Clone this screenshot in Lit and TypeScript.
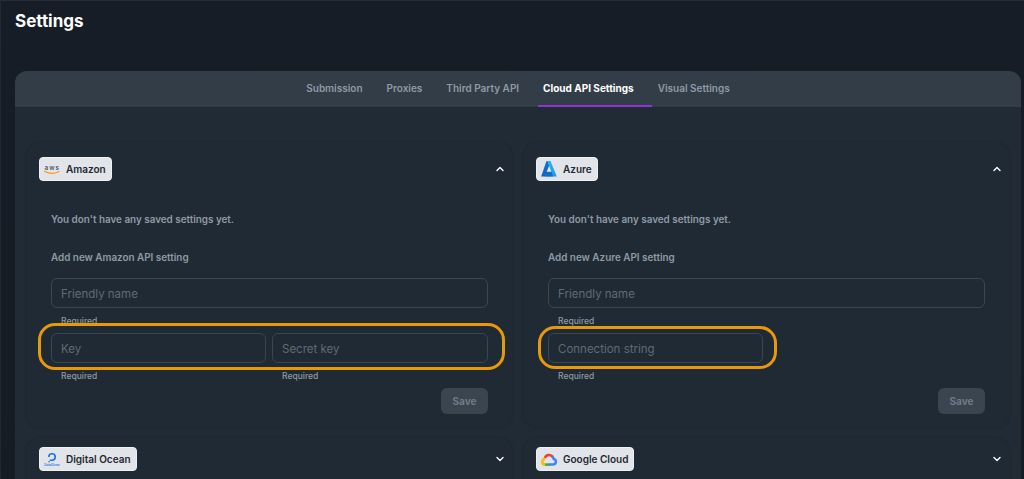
import { LitElement, html, css, svg } from "lit";
import { customElement, property } from "lit/decorators.js";

const chevron = (up: boolean) => html`<svg class="chev" width="8" height="8" viewBox="0 0 8 8" fill="none">
  <path d=${up ? "M1 5.4 4 2.6l3 2.8" : "M1 2.6 4 5.4l3-2.8"} stroke="#fff" stroke-width="1.4" stroke-linecap="round" stroke-linejoin="round" />
</svg>`;

const logos: Record<string, unknown> = {
  Amazon: svg`<svg width="16" height="11" viewBox="0 0 16 11">
    <text x="0.5" y="5.8" font-family="Inter, sans-serif" font-size="6.4" font-weight="500" fill="#3a4350" textLength="14.5">aws</text>
    <path d="M.6 7.2c4.4 2.6 10 2.6 14.4.2" fill="none" stroke="#f39c25" stroke-width="1.1" stroke-linecap="round" />
  </svg>`,
  Azure: svg`<svg width="16" height="16" viewBox="0 0 15 15">
    <defs>
      <linearGradient id="az1" x1="0" y1="0" x2="0.3" y2="1"><stop offset="0" stop-color="#1278cf"/><stop offset="1" stop-color="#0b62bd"/></linearGradient>
      <linearGradient id="az2" x1="0.2" y1="0" x2="0.7" y2="1"><stop offset="0" stop-color="#2fb6ee"/><stop offset="1" stop-color="#1d9be6"/></linearGradient>
    </defs>
    <path d="M5 .3h4.2L3.6 14.6H.2Z" fill="url(#az1)"/>
    <path d="M9 .3H6l3.7 10-5 2.2-1 2.1h11.1Z" fill="url(#az2)"/>
    <path d="M4.8 10h5l1.5 4.6H3.4Z" fill="#0c6ec9"/>
  </svg>`,
  "Digital Ocean": svg`<svg width="16" height="14" viewBox="0 0 16 14">
    <path d="M8 9V7.4a2.4 2.4 0 1 0-2.4-2.4H4a4 4 0 1 1 4 4Z" fill="#1a73e8"/>
    <path d="M5.8 9H8V7.4H5.8ZM4.4 10.2h1.4V9H4.4Z" fill="#1a73e8"/>
    <text x="0" y="13.6" font-family="Inter, sans-serif" font-size="2.8" font-weight="600" fill="#2f7fe6" textLength="16">DigitalOcean</text>
  </svg>`,
  "Google Cloud": svg`<svg width="16" height="13" viewBox="0 0 16 13" fill="none" stroke-width="2.5">
    <path d="M12 4.2A4.6 4.6 0 0 0 3.8 5" stroke="#ea4335"/>
    <path d="M11.2 3.4A4.4 4.4 0 0 1 12.6 6.6" stroke="#4285f4"/>
    <path d="M12 6a2.8 2.8 0 0 1 .2 5.6H8" stroke="#4285f4"/>
    <path d="M8.6 11.6H3.6" stroke="#34a853"/>
    <path d="M4.2 11.6A2.8 2.8 0 0 1 4 6" stroke="#fbbc05"/>
  </svg>`,
};

@customElement("text-field")
class TextField extends LitElement {
  static styles = css`
    :host {
      display: block;
      min-width: 0;
    }
    input {
      display: block;
      box-sizing: border-box;
      width: 100%;
      height: 30px;
      padding: 1px 9px 0;
      background: transparent;
      border: 1px solid #3b4650;
      border-radius: 6px;
      color: #fff;
      font: 400 11.5px Inter, sans-serif;
      outline: none;
    }
    input::placeholder {
      color: #5f6a75;
      opacity: 1;
    }
    .hint {
      height: 25px;
      padding: 7px 0 0 10px;
      box-sizing: border-box;
      color: #8f9aa5;
      font: 500 8.5px/12px Inter, sans-serif;
    }
  `;

  @property() placeholder = "";

  render() {
    return html`
      <input type="text" placeholder=${this.placeholder} />
      <div class="hint">Required</div>
    `;
  }
}

@customElement("app-root")
export class AppRoot extends LitElement {
  static styles = css`
    :host {
      display: block;
      box-sizing: border-box;
      height: 479px;
      overflow: hidden;
      padding: 0 3px 0 14px;
      border-top: 1px solid #272d36;
      border-left: 1px solid #232933;
      background: linear-gradient(#171d26, #161c24);
      font-family: Inter, sans-serif;
    }
    h1 {
      margin: 0;
      height: 70px;
      padding-top: 10px;
      box-sizing: border-box;
      color: #fff;
      font-size: 17px;
      line-height: 20px;
      font-weight: 700;
    }
    .panel {
      background: #212b35;
      border-radius: 12px 12px 0 0;
      padding-bottom: 12px;
    }
    .tabs {
      display: flex;
      justify-content: center;
      gap: 24px;
      height: 36px;
      background: #333d47;
      border-radius: 12px 12px 0 0;
    }
    .tab {
      display: flex;
      align-items: center;
      box-sizing: border-box;
      height: 36px;
      padding-bottom: 2px;
      color: #8f9aa5;
      font-size: 10px;
      font-weight: 600;
      white-space: nowrap;
    }
    .tab.active {
      color: #fff;
      font-weight: 700;
      border-bottom: 2px solid #8e33d6;
      margin: 0 -18px 0 -5px;
      padding: 0 18px 0 5px;
    }
    .grid {
      display: grid;
      grid-template-columns: 485px 485px;
      gap: 11px 12px;
      padding: 36px 12px 0;
    }
    .card {
      background: #202a34;
      border-radius: 12px;
      box-shadow: 0 0 3px rgba(0, 0, 0, 0.18);
    }
    .head {
      display: flex;
      align-items: center;
      justify-content: space-between;
      padding: 14px 8px 0 12px;
      height: 24px;
    }
    .head.closed {
      padding-top: 9px;
    }
    .chev {
      display: block;
    }
    .chip {
      display: flex;
      align-items: center;
      gap: 6px;
      box-sizing: border-box;
      height: 24px;
      padding: 0 5px 0 4px;
      background: #e1e4e8;
      border: 1px solid #eef0f2;
      border-radius: 4px;
      color: #1f2732;
      font-size: 10px;
      font-weight: 600;
      white-space: nowrap;
    }
    .logo {
      display: flex;
      align-items: center;
      justify-content: center;
      width: 16px;
      height: 16px;
    }
    .body {
      padding: 30px 24px 13px;
    }
    .msg {
      margin: 0;
      color: #8f9aa5;
      font-size: 9.9px;
      line-height: 16px;
      font-weight: 600;
    }
    .add {
      margin: 22px 0 13px;
    }
    .row {
      position: relative;
      display: grid;
      grid-template-columns: 215px 1fr;
      gap: 6px;
    }
    .ring {
      position: absolute;
      box-sizing: border-box;
      top: -10px;
      left: -13px;
      right: -17px;
      height: 47px;
      border: 3px solid #e8990a;
      border-radius: 17px;
      pointer-events: none;
    }
    .ring.half {
      right: auto;
      left: -10px;
      width: 239px;
      top: -7px;
      height: 43px;
    }
    .actions {
      display: flex;
      justify-content: flex-end;
    }
    button {
      width: 47px;
      height: 26px;
      padding: 0;
      border: none;
      border-radius: 6px;
      background: #3a4550;
      color: #6f7b88;
      font: 700 10px Inter, sans-serif;
    }
  `;

  private renderChip(name: string) {
    return html`<div class="chip">
      <span class="logo">${logos[name]}</span>${name}
    </div>`;
  }

  private renderCard(name: string, fields: string[]) {
    return html`
      <section class="card">
        <div class="head">${this.renderChip(name)} ${chevron(true)}</div>
        <div class="body">
          <p class="msg">You don't have any saved settings yet.</p>
          <p class="msg add">Add new ${name} API setting</p>
          <text-field placeholder="Friendly name"></text-field>
          <div class="row">
            ${fields.map((f) => html`<text-field placeholder=${f}></text-field>`)}
            <div class="ring ${fields.length === 1 ? "half" : ""}"></div>
          </div>
          <div class="actions"><button disabled>Save</button></div>
        </div>
      </section>
    `;
  }

  private renderCollapsed(name: string) {
    return html`
      <section class="card">
        <div class="head closed">${this.renderChip(name)} ${chevron(false)}</div>
        <div style="height:40px"></div>
      </section>
    `;
  }

  render() {
    const tabs = ["Submission", "Proxies", "Third Party API", "Cloud API Settings", "Visual Settings"];
    return html`
      <h1>Settings</h1>
      <div class="panel">
        <nav class="tabs">
          ${tabs.map((t) => html`<div class="tab ${t === "Cloud API Settings" ? "active" : ""}">${t}</div>`)}
        </nav>
        <div class="grid">
          ${this.renderCard("Amazon", ["Key", "Secret key"])}
          ${this.renderCard("Azure", ["Connection string"])}
          ${this.renderCollapsed("Digital Ocean")}
          ${this.renderCollapsed("Google Cloud")}
        </div>
      </div>
    `;
  }
}
